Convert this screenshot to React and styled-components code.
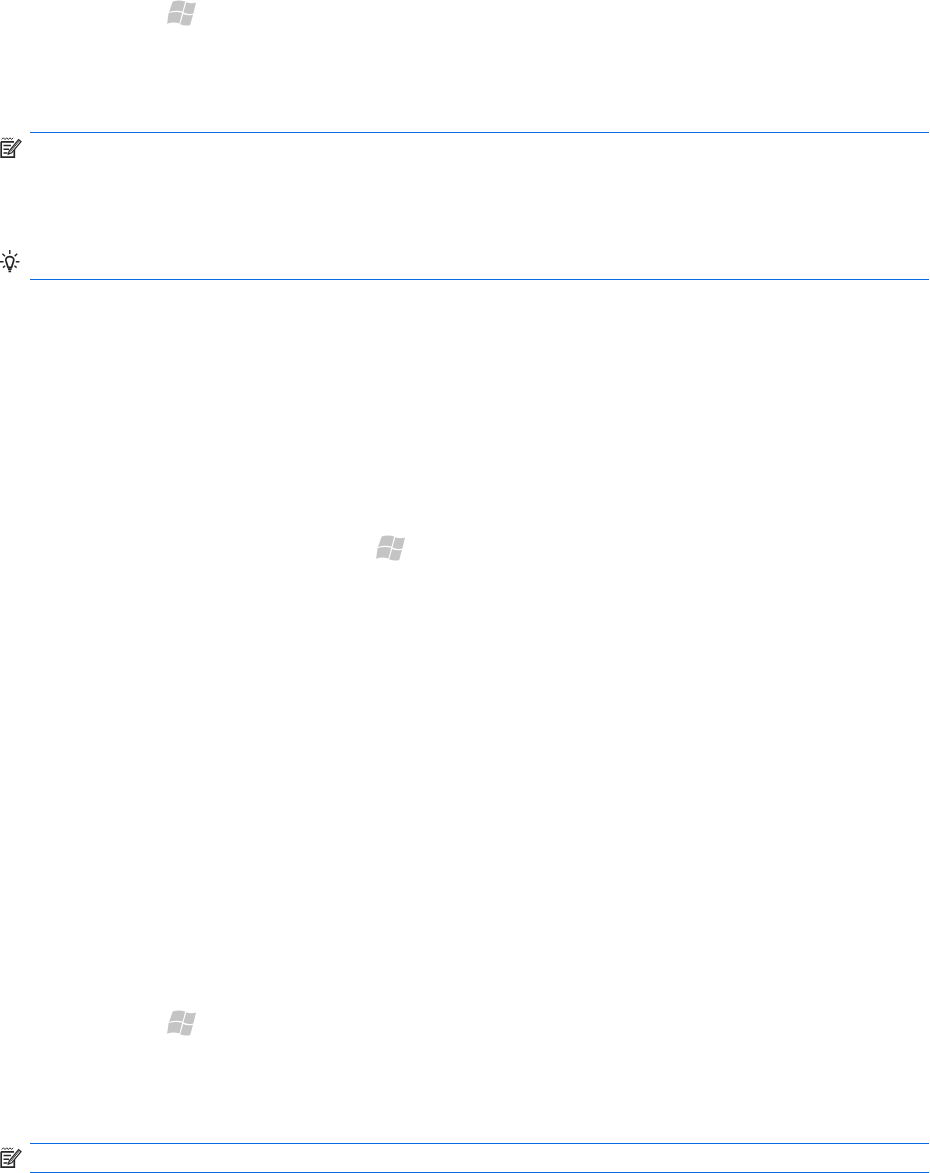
import React from "react";
import styled, { createGlobalStyle } from "styled-components";

const Global = createGlobalStyle`
  html, body { margin: 0; padding: 0; background: #fff; }
  #root { width: 930px; height: 1173px; overflow: hidden; }
`;

const Page = styled.main`
  display: flex;
  flex-direction: column;
  width: 930px;
  height: 1173px;
`;

const LogoRow = styled.div`
  display: flex;
  height: 26px;
  margin-top: ${(p) => p.$top}px;
  padding-left: ${(p) => p.$left}px;
`;

const Callout = styled.section`
  display: grid;
  grid-template-columns: 30px 899px;
  margin-top: ${(p) => p.$top}px;
`;

const IconCell = styled.div`
  display: flex;
  align-items: flex-start;
  padding-top: ${(p) => p.$pad || 0}px;
`;

const Body = styled.div`
  height: ${(p) => p.$height}px;
  border-top: ${(p) => (p.$top ? "1px solid #0a6ae0" : "none")};
  border-bottom: ${(p) => (p.$bottom ? "1px solid #0a6ae0" : "none")};
`;

const LogoSvg = styled.svg`
  filter: blur(0.45px);
`;

const Pane = styled.path`
  fill: #c4c4c4;
`;

const WindowsLogo = () => (
  <LogoSvg width="30" height="26" viewBox="-1 0 30 26">
    <Pane d="M4.7 1.6C8.8 0.2 13 0.2 17.2 1.6L14.6 11.6C10.2 10.4 5.6 10.6 1 12Z" />
    <Pane d="M18.3 2.2C21.3 3.4 24.4 3.6 28 2.6L25.4 13.4C22 14.4 18.6 14.2 15.4 12.6Z" />
    <Pane d="M0.6 13C5.4 11.6 10 11.5 14.2 12.8L11.4 23.4C7.2 22 3 22.2 -0.9 23.8Z" />
    <Pane d="M15.2 14C18.3 15.4 21.6 15.6 25 14.7L22.2 25C18.8 25.9 15.4 25.6 12.2 24.2Z" />
  </LogoSvg>
);

const NoteIcon = () => (
  <svg width="22" height="22" viewBox="0 0 22 22" fill="none" stroke="#262626">
    <path d="M1.7 2.5L3.4 0.8L5 2.5L6.7 0.8L8.3 2.5L10 0.8L11.6 2.5L13.2 0.8" strokeWidth="1" />
    <path d="M1 4.8H14M14.3 12V20.2H1.2V4.8" strokeWidth="1.7" />
    <path d="M3.5 8.6H11M3.5 12.2H9M3.5 15.9H7.5" strokeWidth="1.5" />
    <path d="M9.3 13.8L18.6 2.6L21 4.6L11.7 15.8L8.3 17.2Z" fill="#fff" strokeWidth="1.3" />
    <path d="M10.5 14.5L19.2 4" strokeWidth="0.9" />
  </svg>
);

const TipIcon = () => (
  <svg width="20" height="24" viewBox="0 0 20 24" fill="none" stroke="#222">
    <path d="M9.7 7.6C7.4 7.6 5.6 9.2 5.8 11.2C6 12.8 7.4 15.6 8 18.3H11.6C12.2 15.6 13.6 12.8 13.8 11.2C14 9.2 12 7.6 9.7 7.6Z" strokeWidth="1.7" />
    <path d="M8 20.2H11.6M8.5 22.4H11.1" strokeWidth="1.7" />
    <path d="M9.8 1V5M2.4 4.7L5 7.2M17.2 4.7L14.6 7.2M0 12.8H3.6M15.8 12.8H19.4M3 18.6L5.2 16.8M16.6 18.6L14.4 16.8" strokeWidth="1.4" />
  </svg>
);

export default function App() {
  return (
    <>
      <Global />
      <Page>
        <LogoRow $top={0} $left={167}>
          <WindowsLogo />
        </LogoRow>
        <Callout $top={106}>
          <IconCell $pad={5}>
            <NoteIcon />
          </IconCell>
          <Body $top $height={110} />
        </Callout>
        <Callout $top={0}>
          <IconCell $pad={6}>
            <TipIcon />
          </IconCell>
          <Body $bottom $height={36} />
        </Callout>
        <LogoRow $top={255} $left={376}>
          <WindowsLogo />
        </LogoRow>
        <LogoRow $top={449} $left={167}>
          <WindowsLogo />
        </LogoRow>
        <Callout $top={107}>
          <IconCell $pad={4}>
            <NoteIcon />
          </IconCell>
          <Body $top $bottom $height={28} />
        </Callout>
      </Page>
    </>
  );
}
